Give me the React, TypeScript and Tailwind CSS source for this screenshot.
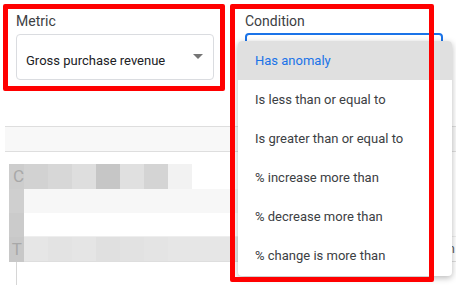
import React from 'react';

const options = [
  'Has anomaly',
  'Is less than or equal to',
  'Is greater than or equal to',
  '% increase more than',
  '% decrease more than',
  '% change is more than',
];

const row1 = ['bg-[#d2d2d2]', 'bg-[#d7d7d7]', 'bg-[#dedede]', 'bg-[#c6c6c6]', 'bg-[#e0e0e0]', 'bg-[#d4d4d4]', 'bg-[#f2f2f2]'];
const row4 = ['bg-[#e6e6e6]', 'bg-[#e3e3e3]', 'bg-[#e5e5e5]', 'bg-[#e0e0e0]', 'bg-[#e2e2e2]', 'bg-[#e4e4e4]', 'bg-[#e6e6e6]'];

const Caret = () => (
  <svg width="10" height="5" viewBox="0 0 10 5" className="mt-[1px] shrink-0">
    <path d="M0 0h10L5 5z" fill="#757575" />
  </svg>
);

export default function App() {
  return (
    <div className="relative w-[456px] h-[285px] overflow-hidden bg-white font-['Roboto',sans-serif] text-[#3c4043]">
      {/* fields */}
      <div className="flex h-[126px] pl-4 gap-[31px]">
        <div className="w-[198px] pt-[13px]">
          <div className="text-[14px] leading-[16px] text-[#3c4043]">Metric</div>
          <div className="mt-[5px] h-[46px] border border-[#dadce0] rounded-[4px] flex items-start justify-between pl-[9px] pr-[10px] pt-[18px]">
            <span className="text-[13px] leading-[16px] text-[#202124]">Gross purchase revenue</span>
            <Caret />
          </div>
        </div>
        <div className="w-[198px] pt-[13px]">
          <div className="text-[14px] leading-[16px] text-[#3c4043]">Condition</div>
          <div className="mt-[4px] h-[46px] border-2 border-[#1a73e8] rounded-[4px]" />
        </div>
      </div>

      {/* table behind */}
      <div className="ml-[5px] h-[26px] border-y border-[#dedede] bg-[#f8f8f8]" />
      <div className="mt-[12px] ml-[9px] flex">
        <div className="w-[15px] flex flex-col text-[#a8a8a8] text-[17px] leading-none">
          <div className="h-[25px] flex items-center justify-end overflow-hidden bg-[#cdcdcd]">C</div>
          <div className="h-[24px] bg-[#cfcfcf]" />
          <div className="h-[24px] bg-[#cbcbcb]" />
          <div className="h-[25px] flex items-center justify-end overflow-hidden pr-[2px] bg-[#c8c8c8]">T</div>
        </div>
        <div className="flex-1 flex flex-col">
          <div className="h-[25px] flex">
            {row1.map((c, i) => (
              <div key={i} className={`w-[24px] ${c}`} />
            ))}
          </div>
          <div className="h-[24px] bg-[#f7f7f7] w-[222px]" />
          <div className="h-[24px] border-b border-[#eeeeee]" />
          <div className="h-[25px] flex border-b border-[#dedede]">
            {row4.map((c, i) => (
              <div key={i} className={`w-[24px] ${c}`} />
            ))}
            <div className="w-[54px] bg-[#e6e6e6]" />
            <div className="flex-1 flex items-center justify-end text-[13px] text-[#5f6368] pr-[1px]">m</div>
          </div>
        </div>
      </div>
      <div className="ml-4 w-px h-[24px] bg-[#d6d6d6]" />

      {/* dropdown menu */}
      <div className="absolute left-[238px] top-[41px] w-[214px] bg-white rounded-[4px] shadow-[0_2px_6px_rgba(0,0,0,0.28)] pb-[1px]">
        {options.map((o, i) => (
          <div
            key={o}
            className={`h-[39px] flex items-center pl-[17px] text-[13px] ${
              i === 0 ? 'bg-[#e0e0e0] text-[#1a73e8] rounded-t-[4px]' : 'text-[#3c4043]'
            }`}
          >
            {o}
          </div>
        ))}
      </div>

      {/* annotation boxes */}
      <div className="absolute left-[3px] top-[4px] w-[222px] h-[87px] border-[5px] border-[#ff0000] rounded-[2px] pointer-events-none" />
      <div className="absolute left-[230px] top-[4px] w-[204px] h-[278px] border-[5px] border-[#ff0000] rounded-[2px] pointer-events-none" />
    </div>
  );
}
